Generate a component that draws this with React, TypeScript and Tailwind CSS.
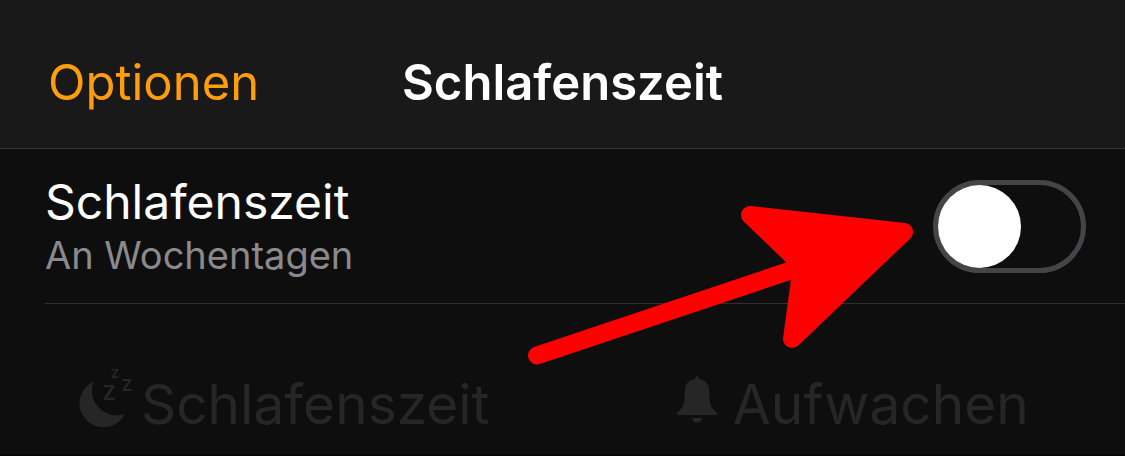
import { useState } from "react";

function MoonIcon() {
  return (
    <svg viewBox="0 -7 54 67" className="h-[67px] w-[54px] shrink-0" fill="currentColor" aria-hidden="true">
      <path d="M14.500 14.500A25 25 0 0 0 46 47A24 24 0 1 1 14.500 14.500Z" />
      <g fontFamily="Roboto, sans-serif" fontWeight="700">
        <text x="24" y="33" fontSize="20">Z</text>
        <text x="43" y="24" fontSize="16">Z</text>
        <text x="32" y="11" fontSize="13">Z</text>
      </g>
    </svg>
  );
}

function BellIcon() {
  return (
    <svg viewBox="0 0 40 48" className="mt-4 h-12 w-10 shrink-0" fill="currentColor" aria-hidden="true">
      <path d="M20 0C21.200 0 21.600 1 21.900 3C28.500 4 32 8 32.200 15C32.400 24 32.500 29 36 33C38 35.200 40 36 40 37.500C40 38.600 39.300 39 38 39H2C.7 39 0 38.600 0 37.500C0 36 2 35.200 4 33C7.500 29 7.600 24 7.800 15C8 8 11.500 4 18.100 3C18.400 1 18.800 0 20 0Z" />
      <path d="M14.700 42H25.300C24.500 45 22.500 46.800 20 46.800S15.500 45 14.700 42Z" />
    </svg>
  );
}

function Arrow() {
  return (
    <svg
      viewBox="528 205 386 161"
      className="pointer-events-none absolute top-[205px] left-[528px] h-[161px] w-[386px]"
      fill="#ff0000"
      stroke="#ff0000"
      strokeWidth="18"
      strokeLinecap="round"
      strokeLinejoin="round"
      aria-hidden="true"
    >
      <path d="M537 355.500L804 266" fill="none" />
      <path d="M750 215L904 232L792 339L802 265Z" />
    </svg>
  );
}

export default function App() {
  const [enabled, setEnabled] = useState(false);

  return (
    <div className="relative overflow-hidden bg-[#0e0e0e] font-['Inter','Liberation_Sans',sans-serif] text-white">
      <header className="grid grid-cols-[1fr_auto_1fr] items-center border-b border-[#343434] bg-[#191919] px-12 pt-[51px] pb-[33px]">
        <button type="button" className="justify-self-start text-[49px] leading-16 text-[#ff9d0d]">
          Optionen
        </button>
        <h1 className="text-[49px] leading-16 font-semibold">Schlafenszeit</h1>
      </header>

      <main>
        <section className="ml-[45px] flex items-center justify-between border-b border-[#303030] pt-6 pr-[39px] pb-6">
          <label htmlFor="bedtime" className="flex flex-col">
            <span className="text-[48px] leading-[58px]">Schlafenszeit</span>
            <span className="text-[38px] leading-12 text-[#8a8a8c]">An Wochentagen</span>
          </label>
          <input
            id="bedtime"
            type="checkbox"
            role="switch"
            checked={enabled}
            onChange={(e) => setEnabled(e.target.checked)}
            className="h-[93px] w-[153px] shrink-0 appearance-none rounded-full border-5 border-[#454547] before:block before:size-[83px] before:rounded-full before:bg-white checked:border-[#34c759] checked:bg-[#34c759] checked:before:ml-[60px]"
          />
        </section>

        <section className="grid grid-cols-2 border-b-2 border-[#060606] pt-14 pb-[18px] pl-1 text-[#262626]">
          <h2 className="flex items-start justify-center gap-2 text-[55px] leading-16">
            <MoonIcon />
            <span className="mt-3">Schlafenszeit</span>
          </h2>
          <h2 className="flex items-start justify-center gap-4 pl-4 text-[55px] leading-16">
            <BellIcon />
            <span className="mt-3">Aufwachen</span>
          </h2>
        </section>
      </main>

      <Arrow />
    </div>
  );
}
